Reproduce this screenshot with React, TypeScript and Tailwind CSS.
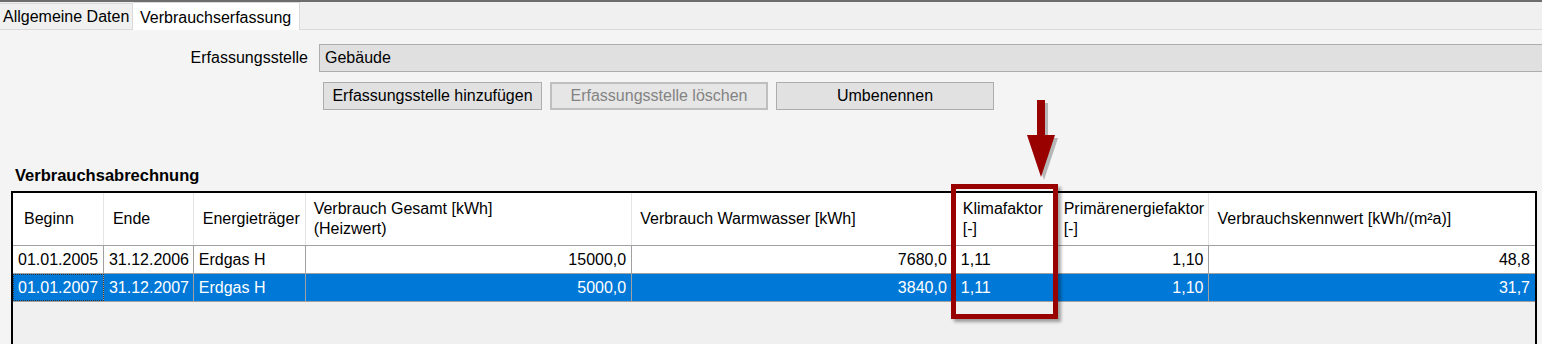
const cols = [
  { w: 'w-[91px]', head: ['Beginn'], pl: 'pl-[11px]' },
  { w: 'w-[90px]', head: ['Ende'], pl: 'pl-[9px]' },
  { w: 'w-[112px]', head: ['Energieträger'], pl: 'pl-[9px]' },
  { w: 'w-[327px]', head: ['Verbrauch Gesamt [kWh]', '(Heizwert)'], pl: 'pl-[8px]' },
  { w: 'w-[321px]', head: ['Verbrauch Warmwasser [kWh]'], pl: 'pl-[8px]' },
  { w: 'w-[105px]', head: ['Klimafaktor', '[-]'], pl: 'pl-[10px]' },
  { w: 'w-[152px]', head: ['Primärenergiefaktor', '[-]'], pl: 'pl-[6px]' },
  { w: 'w-[326px]', head: ['Verbrauchskennwert [kWh/(m²a)]'], pl: 'pl-[8px]' },
];

// alignment per column in data rows
const align = ['left', 'left', 'left', 'right', 'right', 'left', 'right', 'right'];

const rows = [
  ['01.01.2005', '31.12.2006', 'Erdgas H', '15000,0', '7680,0', '1,11', '1,10', '48,8'],
  ['01.01.2007', '31.12.2007', 'Erdgas H', '5000,0', '3840,0', '1,11', '1,10', '31,7'],
];

const HeaderRow = () => (
  <div className="flex h-[53px] bg-white border-b border-[#a0a0a0]">
    {cols.map((c, i) => (
      <div
        key={i}
        className={`${c.w} ${c.pl} flex flex-col justify-center leading-[20px] ${i < cols.length - 1 ? 'border-r border-[#e5e5e5]' : ''}`}
      >
        {c.head.map((h) => (
          <span key={h} className="whitespace-nowrap">{h}</span>
        ))}
      </div>
    ))}
  </div>
);

const DataRow = ({ cells, selected }: { cells: string[]; selected?: boolean }) => (
  <div className={`flex h-[28px] border-b border-[#a0a0a0] ${selected ? 'bg-[#0078d7] text-white' : 'bg-white'}`}>
    {cells.map((v, i) => (
      <div
        key={i}
        className={`${cols[i].w} flex items-center whitespace-nowrap ${
          align[i] === 'right' ? 'justify-end pr-[5px]' : i === 5 ? 'pl-[8px]' : 'pl-[5px]'
        } ${i < cells.length - 1 ? 'border-r border-[#a0a0a0]' : ''} ${
          selected && i === 0 ? 'outline-1 outline-dotted outline-[#333] -outline-offset-1' : ''
        }`}
      >
        {v}
      </div>
    ))}
  </div>
);

const Button = ({ label, w, disabled }: { label: string; w: string; disabled?: boolean }) => (
  <div
    className={`${w} h-[28px] flex items-center justify-center border ${
      disabled ? 'border-[#bfbfbf] bg-[#e6e6e6] text-[#838383] border-2' : 'border-[#adadad] bg-[#e1e1e1]'
    }`}
  >
    {label}
  </div>
);

export default function App() {
  return (
    <div className="relative w-[1542px] h-[344px] overflow-hidden bg-[#f4f4f4] text-[16px] text-black font-['Liberation_Sans',Arial,sans-serif]">
      {/* tab strip */}
      <div className="h-[30px] bg-[#f0f0f0] border-t-2 border-[#6d6d6d] border-b border-b-[#d9d9d9] flex items-end">
        <div className="w-[133px] h-[26px] flex items-center pl-[3px] bg-[#f0f0f0] border-t border-r border-[#d9d9d9] whitespace-nowrap">
          Allgemeine Daten
        </div>
        <div className="w-[167px] h-[28px] -mb-px flex items-start pt-[3px] pl-[7px] bg-white border-r border-t border-[#d9d9d9] whitespace-nowrap">
          Verbrauchserfassung
        </div>
      </div>

      {/* Erfassungsstelle */}
      <div className="flex items-center mt-[14px]">
        <div className="w-[308px] text-right whitespace-nowrap">Erfassungsstelle</div>
        <div className="ml-[11px] flex-1 h-[28px] flex items-center pl-[5px] bg-[#e0e0e0] border-y border-l border-[#adadad]">
          Gebäude
        </div>
      </div>

      <div className="flex gap-[8px] mt-[10px] pl-[323px]">
        <Button label="Erfassungsstelle hinzufügen" w="w-[219px]" />
        <Button label="Erfassungsstelle löschen" w="w-[218px]" disabled />
        <Button label="Umbenennen" w="w-[218px]" />
      </div>

      <div className="mt-[55px] ml-[15px] font-bold text-[16.5px] leading-[20px]">Verbrauchsabrechnung</div>

      {/* table */}
      <div className="mt-[6px] ml-[11px] w-[1526px] h-[200px] border-x-2 border-t-2 border-black bg-[#f0f0f0]">
        <HeaderRow />
        {rows.map((r, i) => (
          <DataRow key={i} cells={r} selected={i === 1} />
        ))}
      </div>

      {/* annotation: arrow + highlight box */}
      <svg className="absolute left-[1024px] top-[100px]" width="40" height="82" viewBox="0 0 40 82">
        <g fill="#000" opacity="0.25" transform="translate(3,3)">
          <rect x="13" y="0" width="8" height="36" />
          <polygon points="3,35 31,35 17,77" />
        </g>
        <rect x="13" y="0" width="8" height="36" fill="#990000" />
        <polygon points="3,35 31,35 17,77" fill="#990000" />
      </svg>
      <div className="absolute left-[951px] top-[184px] w-[107px] h-[135px] border-[5px] border-[#990000] shadow-[3px_3px_3px_rgba(0,0,0,0.35)]" />
    </div>
  );
}
